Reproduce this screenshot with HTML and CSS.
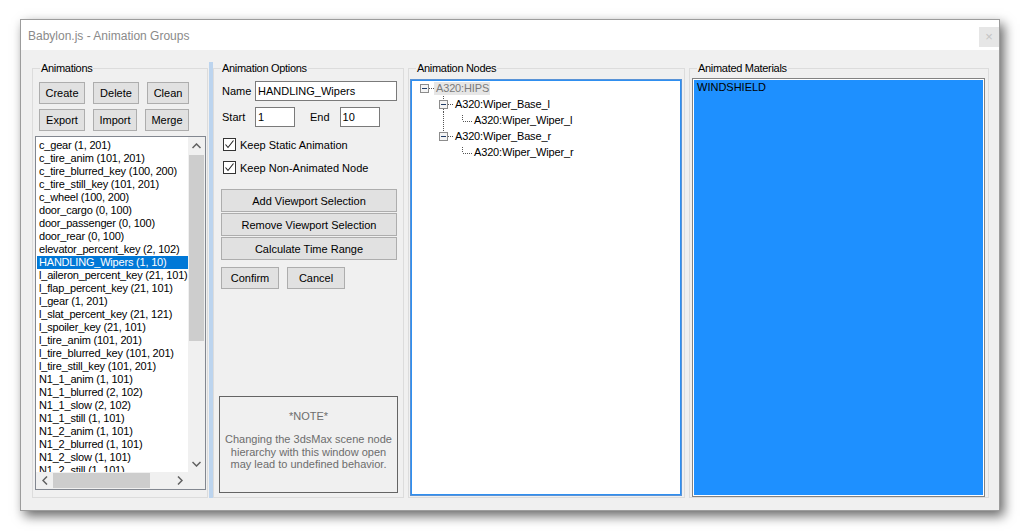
FILE: index.html
```html
<!DOCTYPE html>
<html lang="en">
<head>
  <meta charset="UTF-8">
  <link rel="stylesheet" href="styles.css">
  <title>Babylon.js - Animation Groups</title>
</head>
<body>
  <div class="window">
    <div class="window__title">
      <span class="window__caption">Babylon.js - Animation Groups</span>
      <span class="window__close">&#215;</span>
    </div>

    <div class="window__body">
      <!-- left: animation list -->
      <fieldset class="group group--animations">
        <legend>Animations</legend>
        <div class="btn-row">
          <button class="btn btn--w46">Create</button>
          <button class="btn btn--w46">Delete</button>
          <button class="btn btn--w42">Clean</button>
        </div>
        <div class="btn-row">
          <button class="btn btn--w46">Export</button>
          <button class="btn btn--w44">Import</button>
          <button class="btn btn--w44">Merge</button>
        </div>
        <div class="listbox">
          <ul class="listbox__items">
            <li>c_gear (1, 201)</li>
            <li>c_tire_anim (101, 201)</li>
            <li>c_tire_blurred_key (100, 200)</li>
            <li>c_tire_still_key (101, 201)</li>
            <li>c_wheel (100, 200)</li>
            <li>door_cargo (0, 100)</li>
            <li>door_passenger (0, 100)</li>
            <li>door_rear (0, 100)</li>
            <li>elevator_percent_key (2, 102)</li>
            <li class="is-selected">HANDLING_Wipers (1, 10)</li>
            <li>l_aileron_percent_key (21, 101)</li>
            <li>l_flap_percent_key (21, 101)</li>
            <li>l_gear (1, 201)</li>
            <li>l_slat_percent_key (21, 121)</li>
            <li>l_spoiler_key (21, 101)</li>
            <li>l_tire_anim (101, 201)</li>
            <li>l_tire_blurred_key (101, 201)</li>
            <li>l_tire_still_key (101, 201)</li>
            <li>N1_1_anim (1, 101)</li>
            <li>N1_1_blurred (2, 102)</li>
            <li>N1_1_slow (2, 102)</li>
            <li>N1_1_still (1, 101)</li>
            <li>N1_2_anim (1, 101)</li>
            <li>N1_2_blurred (1, 101)</li>
            <li>N1_2_slow (1, 101)</li>
            <li>N1_2_still (1, 101)</li>
            <li>N1_3_anim (1, 101)</li>
          </ul>
          <div class="vscroll">
            <div class="vscroll__arrow">
              <svg width="9" height="6" viewBox="0 0 9 6"><path d="M0.5 5 L4.5 1 L8.5 5" fill="none" stroke="#606060" stroke-width="1.5"/></svg>
            </div>
            <div class="vscroll__thumb"></div>
            <div class="vscroll__track"></div>
            <div class="vscroll__arrow">
              <svg width="9" height="6" viewBox="0 0 9 6"><path d="M0.5 1 L4.5 5 L8.5 1" fill="none" stroke="#606060" stroke-width="1.5"/></svg>
            </div>
          </div>
          <div class="hscroll">
            <div class="hscroll__arrow">
              <svg width="6" height="9" viewBox="0 0 6 9"><path d="M5 0.5 L1 4.5 L5 8.5" fill="none" stroke="#606060" stroke-width="1.5"/></svg>
            </div>
            <div class="hscroll__thumb"></div>
            <div class="hscroll__track"></div>
            <div class="hscroll__arrow">
              <svg width="6" height="9" viewBox="0 0 6 9"><path d="M1 0.5 L5 4.5 L1 8.5" fill="none" stroke="#606060" stroke-width="1.5"/></svg>
            </div>
          </div>
          <div class="listbox__corner"></div>
        </div>
      </fieldset>

      <div class="splitter"></div>

      <!-- options -->
      <fieldset class="group group--options">
        <legend>Animation Options</legend>
        <div class="field-row">
          <label class="field-label">Name</label>
          <input class="textbox textbox--name" value="HANDLING_Wipers">
        </div>
        <div class="field-row field-row--range">
          <label class="field-label">Start</label>
          <input class="textbox textbox--short" value="1">
          <label class="field-label field-label--end">End</label>
          <input class="textbox textbox--short" value="10">
        </div>
        <div class="check-row check-row--first">
          <span class="checkbox">
            <svg width="11" height="11" viewBox="0 0 11 11"><path d="M1.5 5.5 L4 8.5 L9.5 1.5" fill="none" stroke="#222" stroke-width="1.1"/></svg>
          </span>
          Keep Static Animation
        </div>
        <div class="check-row">
          <span class="checkbox">
            <svg width="11" height="11" viewBox="0 0 11 11"><path d="M1.5 5.5 L4 8.5 L9.5 1.5" fill="none" stroke="#222" stroke-width="1.1"/></svg>
          </span>
          Keep Non-Animated Node
        </div>
        <div class="wide-buttons">
          <button class="btn btn--wide">Add Viewport Selection</button>
          <button class="btn btn--wide">Remove Viewport Selection</button>
          <button class="btn btn--wide">Calculate Time Range</button>
        </div>
        <div class="confirm-row">
          <button class="btn btn--w58">Confirm</button>
          <button class="btn btn--w58">Cancel</button>
        </div>
        <div class="note">
          <div class="note__title">*NOTE*</div>
          <p class="note__text">Changing the 3dsMax scene node hierarchy with this window open may lead to undefined behavior.</p>
        </div>
      </fieldset>

      <!-- nodes tree -->
      <fieldset class="group group--nodes">
        <legend>Animation Nodes</legend>
        <div class="tree">
          <div class="tree__row">
            <svg class="tree__lines" width="23" height="16" viewBox="0 0 23 16">
              <rect x="9.5" y="4.5" width="8" height="8" fill="#f4f4f4" stroke="#8c8c8c"/>
              <path d="M11 8.5 H16" stroke="#1f3b66"/>
              <path d="M18 8.5 H23" stroke="#555" stroke-dasharray="1 1"/>
            </svg>
            <span class="tree__label tree__label--root">A320:HIPS</span>
          </div>
          <div class="tree__row">
            <svg class="tree__lines" width="44" height="16" viewBox="0 0 44 16">
              <path d="M32.5 0 V4 M32.5 13 V16" stroke="#555" stroke-dasharray="1 1"/>
              <rect x="28.5" y="4.5" width="8" height="8" fill="#f4f4f4" stroke="#8c8c8c"/>
              <path d="M30 8.5 H35" stroke="#1f3b66"/>
              <path d="M37 8.5 H43" stroke="#555" stroke-dasharray="1 1"/>
            </svg>
            <span class="tree__label">A320:Wiper_Base_l</span>
          </div>
          <div class="tree__row">
            <svg class="tree__lines" width="63" height="16" viewBox="0 0 63 16">
              <path d="M32.5 0 V16" stroke="#555" stroke-dasharray="1 1"/>
              <path d="M51.5 3 V9 M52 9.5 H62" stroke="#555" stroke-dasharray="1 1"/>
            </svg>
            <span class="tree__label">A320:Wiper_Wiper_l</span>
          </div>
          <div class="tree__row">
            <svg class="tree__lines" width="44" height="16" viewBox="0 0 44 16">
              <path d="M32.5 0 V4" stroke="#555" stroke-dasharray="1 1"/>
              <rect x="28.5" y="4.5" width="8" height="8" fill="#f4f4f4" stroke="#8c8c8c"/>
              <path d="M30 8.5 H35" stroke="#1f3b66"/>
              <path d="M37 8.5 H43" stroke="#555" stroke-dasharray="1 1"/>
            </svg>
            <span class="tree__label">A320:Wiper_Base_r</span>
          </div>
          <div class="tree__row">
            <svg class="tree__lines" width="63" height="16" viewBox="0 0 63 16">
              <path d="M51.5 3 V9 M52 9.5 H62" stroke="#555" stroke-dasharray="1 1"/>
            </svg>
            <span class="tree__label">A320:Wiper_Wiper_r</span>
          </div>
        </div>
      </fieldset>

      <!-- materials -->
      <fieldset class="group group--materials">
        <legend>Animated Materials</legend>
        <div class="materials">
          <div class="materials__fill">
            <div class="materials__item">WINDSHIELD</div>
          </div>
        </div>
      </fieldset>
    </div>
  </div>
</body>
</html>
```

FILE: styles.css
```css
* {
  box-sizing: border-box;
}

body {
  margin: 0;
  padding: 19px 0 20px 20px;
  background: #fff;
  font-family: "Liberation Sans", Arial, sans-serif;
  font-size: 11px;
  color: #000;
}

.window {
  width: 980px;
  height: 492px;
  border: 1px solid #9c9c9c;
  background: #f0f0f0;
  display: flex;
  flex-direction: column;
  box-shadow: 4px 5px 11px rgba(0,0,0,.6);
}

.window__title {
  flex: none;
  height: 30px;
  background: #fff;
  display: flex;
  align-items: flex-start;
  justify-content: space-between;
}

.window__caption {
  font-size: 12px;
  color: #8a8a8a;
  margin: 9px 0 0 7px;
}

.window__close {
  width: 20px;
  height: 20px;
  margin-top: 7px;
  background: #e6e6e6;
  color: #c4c4c4;
  font-size: 13px;
  line-height: 20px;
  text-align: center;
}

.window__body {
  flex: 1;
  min-height: 0;
  display: flex;
  padding: 12px 10px 12px 11px;
}

/* group boxes */
.group {
  margin: 0;
  padding: 0;
  min-width: 0;
  min-height: 0;
  overflow: hidden;
  border: 1px solid #dcdcdc;
  display: flex;
  flex-direction: column;
}

.group legend {
  margin-left: 7px;
  padding: 0 1px;
  line-height: 13px;
  font-size: 11px;
  letter-spacing: -0.3px;
}

.group--animations {
  width: 176px;
  padding: 0 1px 7px 2px;
}

.group--animations legend {
  margin-left: 5px;
}

.group--options {
  width: 191px;
  padding: 0 6px 4px 0;
}

.group--nodes {
  width: 277px;
  margin-left: 4px;
  padding: 0 2px 1px 1px;
}

.group--nodes legend {
  margin-left: 6px;
}

.group--materials {
  width: 300px;
  margin-left: 4px;
  padding: 0 3px 0 2px;
}

.group--materials legend {
  margin-left: 5px;
}

.splitter {
  width: 5px;
  background: #bcd4ee;
  border-left: 1px solid #f0f0f0;
}

/* buttons */
.btn {
  flex: none;
  height: 22px;
  padding: 0;
  border: 1px solid #adadad;
  background: #e1e1e1;
  font-family: inherit;
  font-size: 11px;
  color: #000;
}

.btn--w42 { width: 42px; }
.btn--w44 { width: 44px; }
.btn--w46 { width: 46px; }
.btn--w58 { width: 58px; }

.btn-row {
  flex: none;
  display: flex;
  gap: 8px;
  padding-left: 4px;
  margin-top: 5px;
}

.btn-row:first-of-type {
  margin-top: 7px;
}

/* list box */
.listbox {
  flex: 1;
  min-height: 0;
  margin-top: 5px;
  border: 1px solid #828790;
  background: #fff;
  display: grid;
  grid-template-columns: 1fr 17px;
  grid-template-rows: minmax(0, 1fr) 17px;
  overflow: hidden;
}

.listbox__items {
  list-style: none;
  margin: 0;
  padding: 2px 0 0 1px;
  overflow: hidden;
  min-height: 0;
}

.listbox__items li {
  height: 13px;
  line-height: 13px;
  padding-left: 2px;
  white-space: nowrap;
  letter-spacing: -0.2px;
}

.listbox__items li.is-selected {
  background: #0078d7;
  color: #fff;
}

.vscroll {
  background: #f0f0f0;
  display: flex;
  flex-direction: column;
  min-height: 0;
}

.vscroll__arrow,
.hscroll__arrow {
  width: 17px;
  height: 17px;
  display: flex;
  align-items: center;
  justify-content: center;
  flex: none;
}

.vscroll__thumb {
  flex: none;
  height: 186px;
  margin: 1px 1px 0;
  background: #cdcdcd;
}

.vscroll__track,
.hscroll__track {
  flex: 1;
}

.hscroll {
  background: #f0f0f0;
  display: flex;
}

.hscroll__thumb {
  flex: none;
  width: 97px;
  margin: 1px 0;
  background: #cdcdcd;
}

.listbox__corner {
  background: #f0f0f0;
}

/* options */
.field-row {
  flex: none;
  display: flex;
  align-items: center;
  height: 20px;
  margin-top: 6px;
  padding-left: 8px;
}

.field-label {
  width: 33px;
}

.field-label--end {
  width: auto;
  margin: 0 10px 0 15px;
}

.textbox {
  height: 20px;
  border: 1px solid #7a7a7a;
  background: #fff;
  padding: 0 2px;
  font-family: inherit;
  font-size: 11px;
  color: #000;
  outline: none;
}

.textbox--name {
  width: 142px;
}

.textbox--short {
  width: 40px;
}

.check-row {
  flex: none;
  display: flex;
  align-items: center;
  height: 17px;
  margin-top: 6px;
  padding-left: 9px;
}

.check-row--first {
  margin-top: 9px;
}

.checkbox {
  width: 13px;
  height: 13px;
  border: 1px solid #333;
  background: #fff;
  margin-right: 4px;
  display: flex;
}

.wide-buttons {
  flex: none;
  display: flex;
  flex-direction: column;
  gap: 1px;
  margin-top: 13px;
  padding-left: 7px;
}

.btn--wide {
  width: 176px;
  height: 23px;
}

.confirm-row {
  flex: none;
  display: flex;
  gap: 8px;
  margin-top: 7px;
  padding-left: 7px;
}

.note {
  flex: none;
  margin: auto 0 0 5px;
  width: 179px;
  height: 97px;
  border: 1px solid #646464;
  color: #6d6d6d;
  text-align: center;
  padding-top: 13px;
}

.note__title {
  line-height: 13px;
}

.note__text {
  margin: 10px 0 0;
  line-height: 12.5px;
  padding: 0 2px;
}

/* tree */
.tree {
  flex: 1;
  min-height: 0;
  margin-top: 4px;
  background: #fff;
  border: 1px solid #5a93d6;
  box-shadow: inset 0 0 0 1px #2f8ff0;
}

.tree__row {
  display: flex;
  align-items: center;
  height: 16px;
}

.tree__lines {
  flex: none;
  display: block;
}

.tree__label {
  line-height: 13px;
  white-space: nowrap;
  letter-spacing: -0.15px;
}

.tree__label--root {
  background: #e6e6e6;
  color: #7a7a7a;
  padding: 0 2px;
  width: 56px;
}

/* materials list */
.materials {
  flex: 1;
  min-height: 0;
  margin-top: 3px;
  border: 1px solid #828282;
  background: #fff;
  padding: 1px;
  display: flex;
}

.materials__fill {
  flex: 1;
  background: #1e90ff;
}

.materials__item {
  line-height: 13px;
  padding: 1px 0 0 3px;
}
```
